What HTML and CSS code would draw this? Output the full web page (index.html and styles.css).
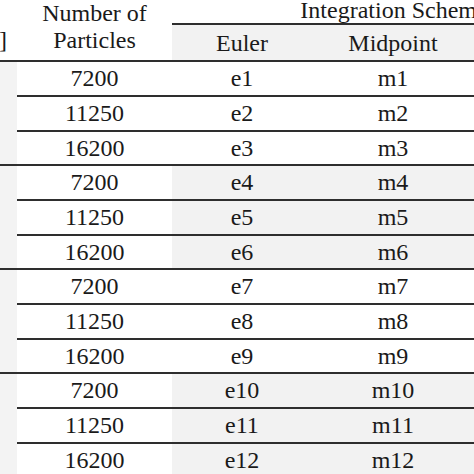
FILE: index.html
```html
<!DOCTYPE html>
<html>
<head>
<meta charset="utf-8">
<link rel="stylesheet" href="styles.css">
</head>
<body>
<div class="frame">
  <div class="grid">
    <div class="hc c0"><span class="hstack"><br>]</span></div>
    <div class="hc c1"><span class="hstack">Number of<br>Particles</span></div>
    <div class="group">Integration Scheme</div>
    <div class="sub">Euler</div>
    <div class="sub">Midpoint</div>
    <div class="sub"></div>

    <div class="lab r3"></div>
    <div class="cell">7200</div><div class="cell">e1</div><div class="cell">m1</div><div class="cell"></div>
    <div class="cell">11250</div><div class="cell">e2</div><div class="cell">m2</div><div class="cell"></div>
    <div class="cell">16200</div><div class="cell">e3</div><div class="cell">m3</div><div class="cell"></div>

    <div class="lab r3"></div>
    <div class="cell">7200</div><div class="cell g">e4</div><div class="cell g">m4</div><div class="cell g"></div>
    <div class="cell">11250</div><div class="cell g">e5</div><div class="cell g">m5</div><div class="cell g"></div>
    <div class="cell">16200</div><div class="cell g">e6</div><div class="cell g">m6</div><div class="cell g"></div>

    <div class="lab r3"></div>
    <div class="cell">7200</div><div class="cell">e7</div><div class="cell">m7</div><div class="cell"></div>
    <div class="cell">11250</div><div class="cell">e8</div><div class="cell">m8</div><div class="cell"></div>
    <div class="cell">16200</div><div class="cell">e9</div><div class="cell">m9</div><div class="cell"></div>

    <div class="lab r3"></div>
    <div class="cell">7200</div><div class="cell g">e10</div><div class="cell g">m10</div><div class="cell g"></div>
    <div class="cell">11250</div><div class="cell g">e11</div><div class="cell g">m11</div><div class="cell g"></div>
    <div class="cell">16200</div><div class="cell g">e12</div><div class="cell g">m12</div><div class="cell g"></div>
  </div>
</div>
</body>
</html>
```
FILE: styles.css
```css
html, body {
  margin: 0;
  padding: 0;
  background: #ffffff;
}
.frame {
  width: 474px;
  height: 474px;
  overflow: hidden;
}
.grid {
  display: grid;
  grid-template-columns: 17px 155px 140px 162px 142px;
  grid-template-rows: 25px 37px repeat(4, 35px 35px 34px);
  width: 616px;
  font-family: "Liberation Serif", "Times New Roman", serif;
  font-size: 24px;
  color: #1a1a1a;
}
.grid > div {
  box-sizing: border-box;
  display: flex;
  align-items: center;
  justify-content: center;
  white-space: nowrap;
}
.hc {
  grid-row: 1 / span 2;
  border-bottom: 2px solid #2e2e2e;
  align-items: flex-start !important;
}
.hstack {
  display: block;
  line-height: 27px;
  text-align: center;
}
.c0 {
  justify-content: flex-end !important;
  padding-right: 10px;
}
.c0 .hstack {
  text-align: right;
}
.group {
  grid-column: 3 / span 3;
  border-bottom: 2px solid #2e2e2e;
  align-items: flex-start !important;
  line-height: 21px;
}
.sub {
  background: #f2f2f2;
  border-bottom: 2px solid #2e2e2e;
  padding-top: 2px;
}
.lab {
  grid-row: span 3;
  background: #f3f3f3;
  border-bottom: 2px solid #2e2e2e;
}
.cell {
  border-bottom: 2px solid #2e2e2e;
}
.cell.g {
  background: #f2f2f2;
}
```
